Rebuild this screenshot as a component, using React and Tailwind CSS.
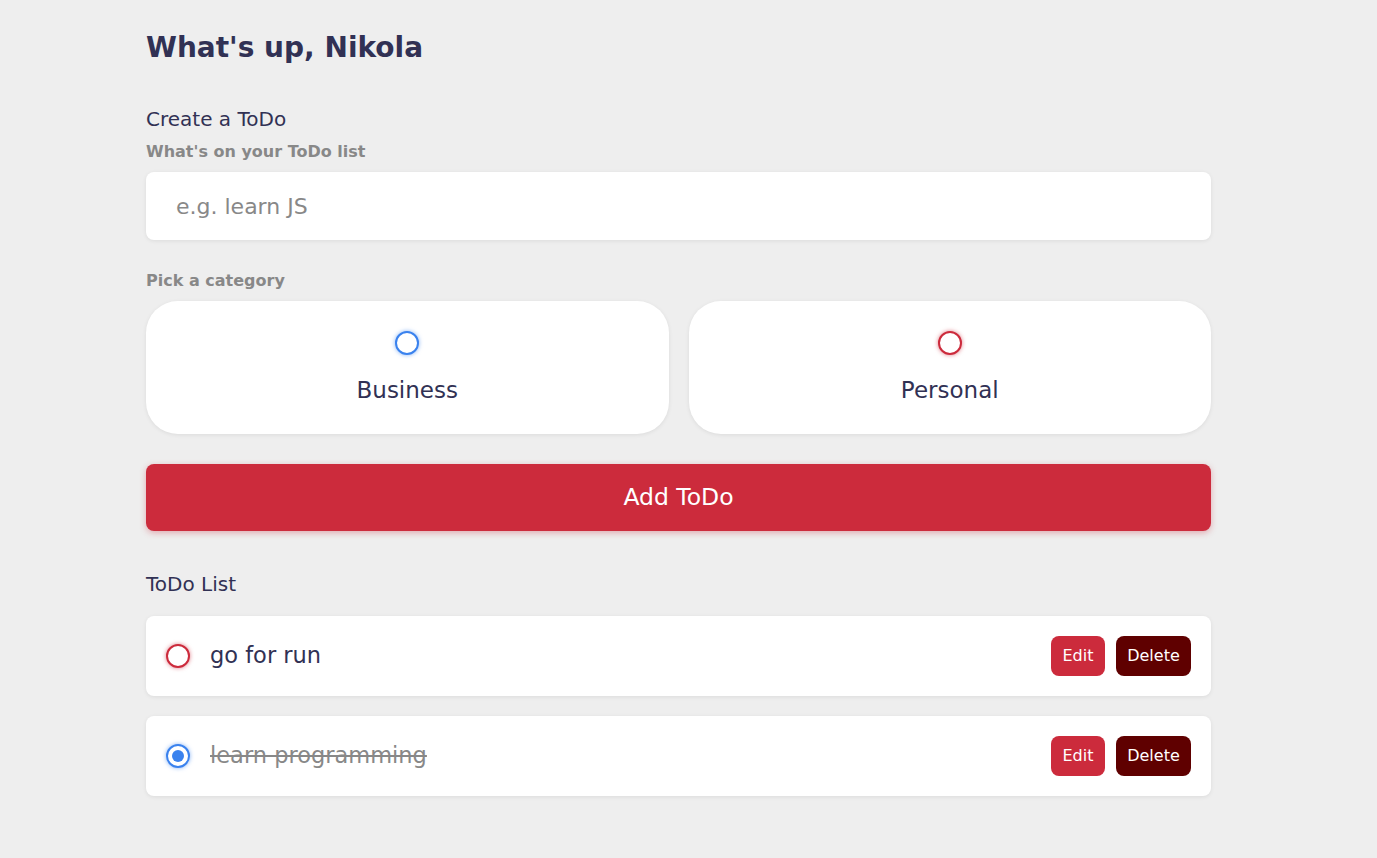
import React, { useState } from 'react';

const Radio = ({ color, checked }) => {
  const ring = color === 'blue'
    ? 'border-[#3a82ee] shadow-[0_0_4px_rgba(58,130,238,0.6)]'
    : 'border-[#cc2b3c] shadow-[0_0_4px_rgba(204,43,60,0.6)]';
  return (
    <span className={`flex items-center justify-center w-6 h-6 rounded-full border-2 bg-white ${ring}`}>
      {checked && <span className="w-3 h-3 rounded-full bg-[#3a82ee]" />}
    </span>
  );
};

const TodoItem = ({ text, category, done }) => (
  <div className="flex items-center h-20 px-5 bg-white rounded-lg shadow-[0_1px_4px_rgba(0,0,0,0.08)]">
    <Radio color={category === 'business' ? 'blue' : 'red'} checked={done} />
    <span className={`ml-5 flex-1 text-[22.5px] ${done ? 'line-through text-[#888]' : 'text-[#313154]'}`}>{text}</span>
    <div className="flex gap-[11px]">
      <button className="h-10 w-[54px] rounded-lg bg-[#cc2b3c] text-white text-[16px]">Edit</button>
      <button className="h-10 w-[75px] rounded-lg bg-[#5f0000] text-white text-[16px]">Delete</button>
    </div>
  </div>
);

export default function App() {
  const [todos] = useState([
    { text: 'go for run', category: 'personal', done: false },
    { text: 'learn programming', category: 'business', done: true },
  ]);

  return (
    <div className="min-h-[858px] bg-[#eeeeee] font-['DejaVu_Sans',sans-serif] text-[#313154]">
      <main className="ml-[146px] w-[1065px] pt-[31px] pb-10">
        <h2 className="text-[28px] leading-[34px] font-bold">What's up, Nikola</h2>

        <h3 className="mt-[42px] text-[20px] leading-6">Create a ToDo</h3>
        <h4 className="mt-[11px] text-[16px] leading-5 font-bold text-[#888]">What's on your ToDo list</h4>
        <input
          className="mt-[10px] block w-full h-[68px] px-[30px] rounded-lg bg-white text-[22px] shadow-[0_1px_4px_rgba(0,0,0,0.08)] outline-none placeholder:text-[#888]"
          placeholder="e.g. learn JS"
        />

        <h4 className="mt-[31px] text-[16px] leading-5 font-bold text-[#888]">Pick a category</h4>
        <div className="mt-[10px] grid grid-cols-2 gap-5">
          {['Business', 'Personal'].map((c) => (
            <label key={c} className="flex flex-col items-center h-[133px] pt-[30px] rounded-[32px] bg-white shadow-[0_1px_4px_rgba(0,0,0,0.08)]">
              <Radio color={c === 'Business' ? 'blue' : 'red'} />
              <span className="mt-[23px] text-[23px] leading-6">{c}</span>
            </label>
          ))}
        </div>

        <button className="mt-[30px] block w-full h-[67px] rounded-lg bg-[#cc2b3c] text-white text-[23.5px] shadow-[0_2px_6px_rgba(204,43,60,0.35)]">
          Add ToDo
        </button>

        <h3 className="mt-[41px] text-[20px] leading-6">ToDo List</h3>
        <div className="mt-5 flex flex-col gap-5">
          {todos.map((t) => (
            <TodoItem key={t.text} {...t} />
          ))}
        </div>
      </main>
    </div>
  );
}
